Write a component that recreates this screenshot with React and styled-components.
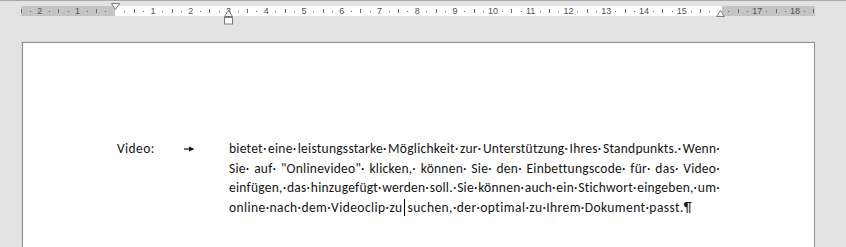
import React from "react";
import styled, { createGlobalStyle } from "styled-components";

const CM = 37.795;
const QUARTER = CM / 4;

const GlobalStyle = createGlobalStyle`
  html, body {
    margin: 0;
    padding: 0;
    background: #e3e3e3;
    overflow: hidden;
  }
`;

const Window = styled.div`
  width: 846px;
  height: 247px;
  display: flex;
  flex-direction: column;
  border-top: 1px solid #a9a9a9;
  box-sizing: border-box;
  background: #e3e3e3;
  overflow: hidden;
`;

const RulerRow = styled.div`
  position: relative;
  padding: 5px 0 0 21px;
  height: 10px;
`;

const Ruler = styled.div`
  display: grid;
  width: 794px;
  height: 10px;
  overflow: hidden;
`;

const Zones = styled.div`
  grid-area: 1 / 1;
  display: flex;
`;

const Zone = styled.div`
  width: ${({ $w }) => ($w ? `${$w}px` : "auto")};
  flex: ${({ $w }) => ($w ? "none" : "1")};
  background: ${({ $margin }) => ($margin ? "#c4c4c4" : "#ffffff")};
`;

const Ticks = styled.div`
  grid-area: 1 / 1;
  display: grid;
  grid-template-columns: repeat(85, ${QUARTER}px);
  margin-left: -${QUARTER / 2}px;
  align-items: center;
  justify-items: center;
`;

const Num = styled.span`
  font-family: "Liberation Sans", Arial, sans-serif;
  font-size: 9px;
  line-height: 10px;
  color: #505050;
`;

const Dot = styled.span`
  width: 1px;
  height: 1px;
  background: #6a6a6a;
`;

const Bar = styled.span`
  width: 1px;
  height: 4px;
  background: #6a6a6a;
`;

const Marker = styled.svg`
  position: absolute;
  left: ${({ $x }) => $x}px;
  top: ${({ $y }) => $y}px;
  overflow: visible;
`;

const Page = styled.div`
  margin: 26px 0 0 22px;
  width: 791px;
  flex: 1;
  background: #ffffff;
  border: 1px solid #8e8e8e;
  border-bottom: none;
  box-shadow: -1px -1px 0 #dadada;
`;

const Body = styled.div`
  padding: 96px 0 0 94px;
  width: 603px;
  font-family: Carlito, Lato, "Open Sans", sans-serif;
  font-size: 13.5px;
  line-height: 19.6px;
  color: #141414;
`;

const Paragraph = styled.div`
  display: grid;
  grid-template-columns: 112px 1fr;
`;

const Label = styled.div`
  display: flex;
  align-items: flex-start;
  letter-spacing: 0.4px;
`;

const TabMark = styled.svg`
  margin: 7px 0 0 29px;
`;

const Lines = styled.div`
  display: flex;
  flex-direction: column;
  min-width: 0;
`;

const Line = styled.div`
  display: flex;
  justify-content: ${({ $last }) => ($last ? "flex-start" : "space-between")};
  white-space: pre;
  letter-spacing: ${({ $last }) => ($last ? "0.42px" : "0.25px")};
`;

const Caret = styled.span`
  display: inline-block;
  width: 1px;
  height: 17px;
  margin: 1px 3px 0 1px;
  background: #000000;
`;

const LINES = [
  "bietet eine leistungsstarke Möglichkeit zur Unterstützung Ihres Standpunkts. Wenn",
  'Sie auf "Onlinevideo" klicken, können Sie den Einbettungscode für das Video',
  "einfügen, das hinzugefügt werden soll. Sie können auch ein Stichwort eingeben, um",
];

const rulerMarks = () => {
  const marks = [];
  for (let k = 0; k <= 84; k++) {
    const rel = k - 10;
    if (rel === 0 || rel === 64) {
      marks.push(<span key={k} />);
    } else if (rel % 4 === 0) {
      marks.push(<Num key={k}>{Math.abs(rel / 4)}</Num>);
    } else if (Math.abs(rel % 4) === 2) {
      marks.push(<Bar key={k} />);
    } else {
      marks.push(<Dot key={k} />);
    }
  }
  return marks;
};

const DownTriangle = ({ x, y }) => (
  <Marker $x={x} $y={y} width="9" height="7" viewBox="0 0 9 7">
    <path d="M0.5 0.5 H8.5 L4.5 6.5 Z" fill="#fff" stroke="#7a7a7a" />
  </Marker>
);

const UpTriangle = ({ x, y, box }) => (
  <Marker $x={x} $y={y} width="9" height={box ? 15 : 8} viewBox={box ? "0 0 9 15" : "0 0 9 8"}>
    <path d="M4.5 0.5 L8.5 6.5 H0.5 Z" fill="#fff" stroke="#7a7a7a" />
    {box && <rect x="0.5" y="7.5" width="8" height="6.5" fill="#fff" stroke="#7a7a7a" />}
  </Marker>
);

const App = () => {
  return (
    <>
      <GlobalStyle />
      <Window>
        <RulerRow>
          <Ruler>
            <Zones>
              <Zone $margin $w={94} />
              <Zone />
              <Zone $margin $w={96} />
            </Zones>
            <Ticks>{rulerMarks()}</Ticks>
          </Ruler>
          <DownTriangle x={111} y={2} />
          <UpTriangle x={224} y={9} box />
          <UpTriangle x={716} y={9} />
        </RulerRow>
        <Page>
          <Body>
            <Paragraph>
              <Label>
                <span>Video:</span>
                <TabMark width="11" height="6" viewBox="0 0 11 6">
                  <path d="M0 3 H6" stroke="#111" strokeWidth="1.2" />
                  <path d="M5 0.5 L10.5 3 L5 5.5 Z" fill="#111" />
                </TabMark>
              </Label>
              <Lines>
                {LINES.map((line, i) => (
                  <Line key={i}>
                    {line.split(" ").map((w, j) => (
                      <span key={j}>{w + "·"}</span>
                    ))}
                  </Line>
                ))}
                <Line $last>
                  <span>online·nach·dem·Videoclip·zu</span>
                  <Caret />
                  <span>suchen,·der·optimal·zu·Ihrem·Dokument·passt.¶</span>
                </Line>
              </Lines>
            </Paragraph>
          </Body>
        </Page>
      </Window>
    </>
  );
};

export default App;
